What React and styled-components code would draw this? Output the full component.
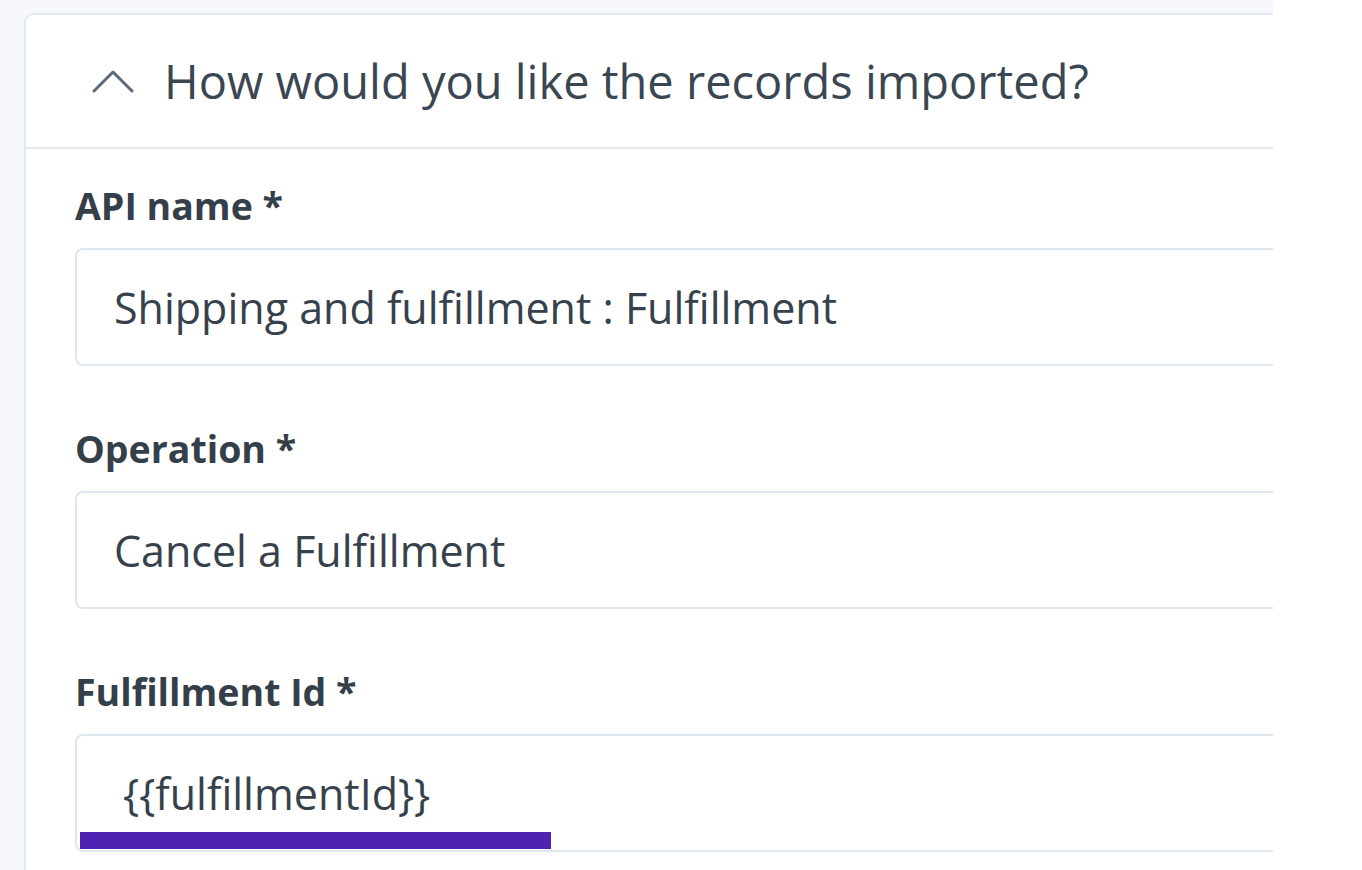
import React from 'react';
import styled, { createGlobalStyle } from 'styled-components';

const GlobalStyle = createGlobalStyle`
  html, body {
    margin: 0;
    padding: 0;
    background: #ffffff;
  }
  body {
    font-family: "Open Sans", "Noto Sans", sans-serif;
    color: #36414c;
  }
`;

const Frame = styled.div`
  width: 1273px;
  height: 870px;
  overflow: hidden;
  background: #f6f8fc;
  padding: 13px 0 0 24px;
  box-sizing: border-box;
`;

const Card = styled.section`
  background: #ffffff;
  border: 2px solid #e1e9f2;
  border-right: none;
  border-radius: 10px 0 0 0;
  min-height: 900px;
`;

const Header = styled.div`
  height: 132px;
  display: flex;
  align-items: center;
  gap: 30px;
  padding-left: 66px;
  border-bottom: 2px solid #e3eaf2;
`;

const Title = styled.h2`
  margin: 0;
  font-size: 47px;
  line-height: 56px;
  font-weight: 400;
  color: #3a4651;
  white-space: nowrap;
`;

const Body = styled.div`
  padding: 33px 0 0 49px;
  display: flex;
  flex-direction: column;
  gap: 59px;
`;

const Field = styled.div`
  display: flex;
  flex-direction: column;
  gap: 18px;
`;

const Label = styled.label`
  font-size: 37.5px;
  line-height: 48px;
  font-weight: 700;
  color: #343f4a;
  white-space: nowrap;
`;

const Input = styled.div`
  position: relative;
  height: 114px;
  border: 2px solid #dfe7f0;
  border-right: none;
  border-radius: 8px 0 0 8px;
  display: flex;
  align-items: center;
  padding-left: ${p => p.$indent || 37}px;
  font-size: 43px;
  color: #36414c;
  white-space: nowrap;
`;

const Highlight = styled.span`
  position: absolute;
  left: 3px;
  bottom: 1px;
  width: 471px;
  height: 17px;
  background: #4f23b1;
`;

const Chevron = () => (
  <svg width="42" height="24" viewBox="0 0 42 24" fill="none">
    <path d="M2 22 L21 3 L40 22" stroke="#5c6a77" strokeWidth="3" strokeLinecap="round" strokeLinejoin="round" />
  </svg>
);

const fields = [
  { label: 'API name *', value: 'Shipping and fulfillment : Fulfillment' },
  { label: 'Operation *', value: 'Cancel a Fulfillment' },
  { label: 'Fulfillment Id *', value: '{{fulfillmentId}}', indent: 46, marked: true },
];

export default function App() {
  return (
    <>
      <GlobalStyle />
      <Frame>
        <Card>
          <Header>
            <Chevron />
            <Title>How would you like the records imported?</Title>
          </Header>
          <Body>
            {fields.map(f => (
              <Field key={f.label}>
                <Label>{f.label}</Label>
                <Input $indent={f.indent}>
                  {f.value}
                  {f.marked && <Highlight />}
                </Input>
              </Field>
            ))}
          </Body>
        </Card>
      </Frame>
    </>
  );
}
